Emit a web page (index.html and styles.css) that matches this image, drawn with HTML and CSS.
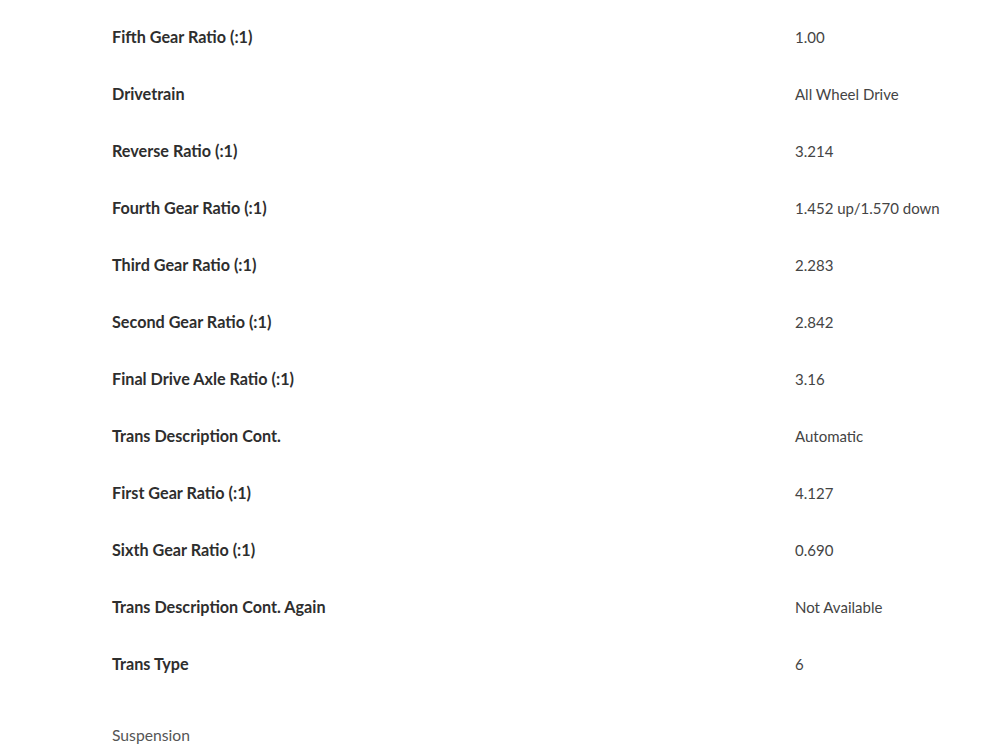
FILE: index.html
```html
<!DOCTYPE html>
<html>
<head>
<meta charset="utf-8">
<link rel="stylesheet" href="styles.css">
</head>
<body>
<div class="specs">
  <div class="row"><div class="label">Fifth Gear Ratio (:1)</div><div class="value">1.00</div></div>
  <div class="row"><div class="label">Drivetrain</div><div class="value">All Wheel Drive</div></div>
  <div class="row"><div class="label">Reverse Ratio (:1)</div><div class="value">3.214</div></div>
  <div class="row"><div class="label">Fourth Gear Ratio (:1)</div><div class="value">1.452 up/1.570 down</div></div>
  <div class="row"><div class="label">Third Gear Ratio (:1)</div><div class="value">2.283</div></div>
  <div class="row"><div class="label">Second Gear Ratio (:1)</div><div class="value">2.842</div></div>
  <div class="row"><div class="label">Final Drive Axle Ratio (:1)</div><div class="value">3.16</div></div>
  <div class="row"><div class="label">Trans Description Cont.</div><div class="value">Automatic</div></div>
  <div class="row"><div class="label">First Gear Ratio (:1)</div><div class="value">4.127</div></div>
  <div class="row"><div class="label">Sixth Gear Ratio (:1)</div><div class="value">0.690</div></div>
  <div class="row"><div class="label">Trans Description Cont. Again</div><div class="value">Not Available</div></div>
  <div class="row"><div class="label">Trans Type</div><div class="value">6</div></div>
</div>
<div class="section">Suspension</div>
</body>
</html>
```
FILE: styles.css
```css
html, body {
  margin: 0;
  padding: 0;
  background: #fff;
}
body {
  font-family: Lato, "Open Sans", sans-serif;
  color: #2a2a2a;
  overflow: hidden;
}
.specs {
  padding: 8px 0 0 112px;
}
.row {
  display: grid;
  grid-template-columns: 683px auto;
  height: 57px;
  align-items: center;
}
.label {
  font-size: 16.2px;
  font-weight: 700;
  color: #2e2e2e;
}
.value {
  font-size: 15px;
  font-weight: 400;
  color: #444;
}
.section {
  padding: 34px 0 0 112px;
  font-size: 15.7px;
  font-weight: 400;
  color: #555;
}
```
